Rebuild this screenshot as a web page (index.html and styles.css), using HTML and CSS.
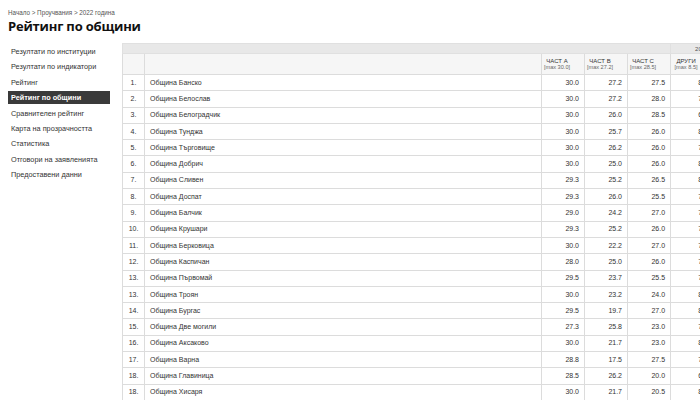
FILE: index.html
```html
<!DOCTYPE html>
<html lang="bg">
<head>
	<meta charset="UTF-8">
	<meta name="viewport" content="width=device-width, initial-scale=1.0">
	<title>Рейтинг по общини</title>
	<link rel="stylesheet" href="styles.css">
</head>
<body>
	<div class="page">
		<div class="breadcrumb">Начало &gt; Проучвания &gt; 2022 година</div>
		<h1 class="title">Рейтинг по общини</h1>

		<div class="layout">
			<ul class="side-menu">
				<li><a href="#">Резултати по институции</a></li>
				<li><a href="#">Резултати по индикатори</a></li>
				<li><a href="#">Рейтинг</a></li>
				<li class="active"><a href="#">Рейтинг по общини</a></li>
				<li><a href="#">Сравнителен рейтинг</a></li>
				<li><a href="#">Карта на прозрачността</a></li>
				<li><a href="#">Статистика</a></li>
				<li><a href="#">Отговори на заявленията</a></li>
				<li><a href="#">Предоставени данни</a></li>
			</ul>

			<div class="content">
				<table class="rating">
					<colgroup>
						<col class="c-rank">
						<col class="c-name">
						<col class="c-num">
						<col class="c-num">
						<col class="c-num">
						<col class="c-num">
						<col class="c-num">
					</colgroup>
					<thead>
						<tr class="band">
							<td colspan="5"></td>
							<td colspan="2" class="band-year">2022 година</td>
						</tr>
						<tr class="head">
							<th></th>
							<th></th>
							<th>ЧАСТ A<span>[max 30.0]</span></th>
							<th>ЧАСТ B<span>[max 27.2]</span></th>
							<th>ЧАСТ C<span>[max 28.5]</span></th>
							<th>ДРУГИ<span>[max 8.5]</span></th>
							<th>ОБЩО<span>[max 100]</span></th>
						</tr>
					</thead>
					<tbody id="rows"></tbody>
				</table>
			</div>
		</div>
	</div>

	<script>
		var data = [
			["1.", "Община Банско", "30.0", "27.2", "27.5", "8.0"],
			["2.", "Община Белослав", "30.0", "27.2", "28.0", "7.5"],
			["3.", "Община Белоградчик", "30.0", "26.0", "28.5", "6.5"],
			["4.", "Община Тунджа", "30.0", "25.7", "26.0", "8.0"],
			["5.", "Община Търговище", "30.0", "26.2", "26.0", "7.5"],
			["6.", "Община Добрич", "30.0", "25.0", "26.0", "8.0"],
			["7.", "Община Сливен", "29.3", "25.2", "26.5", "8.0"],
			["8.", "Община Доспат", "29.3", "26.0", "25.5", "7.5"],
			["9.", "Община Балчик", "29.0", "24.2", "27.0", "7.5"],
			["10.", "Община Крушари", "29.3", "25.2", "26.0", "7.0"],
			["11.", "Община Берковица", "30.0", "22.2", "27.0", "7.5"],
			["12.", "Община Каспичан", "28.0", "25.0", "26.0", "7.5"],
			["13.", "Община Първомай", "29.5", "23.7", "25.5", "7.5"],
			["13.", "Община Троян", "30.0", "23.2", "24.0", "8.0"],
			["14.", "Община Бургас", "29.5", "19.7", "27.0", "8.0"],
			["15.", "Община Две могили", "27.3", "25.8", "23.0", "7.5"],
			["16.", "Община Аксаково", "30.0", "21.7", "23.0", "8.0"],
			["17.", "Община Варна", "28.8", "17.5", "27.5", "7.5"],
			["18.", "Община Главиница", "28.5", "26.2", "20.0", "6.5"],
			["18.", "Община Хисаря", "30.0", "21.7", "20.5", "8.0"]
		];

		var tbody = document.getElementById("rows");
		for (var i = 0; i < data.length; i++) {
			var r = data[i];
			var total = (parseFloat(r[2]) + parseFloat(r[3]) + parseFloat(r[4]) + parseFloat(r[5])).toFixed(1);
			var tr = document.createElement("tr");
			tr.innerHTML =
				'<td class="rank">' + r[0] + '</td>' +
				'<td class="name">' + r[1] + '</td>' +
				'<td class="num">' + r[2] + '</td>' +
				'<td class="num">' + r[3] + '</td>' +
				'<td class="num">' + r[4] + '</td>' +
				'<td class="num">' + r[5] + '</td>' +
				'<td class="num">' + total + '</td>';
			tbody.appendChild(tr);
		}
	</script>
</body>
</html>
```

FILE: styles.css
```css
html, body {
	margin: 0;
	padding: 0;
	background-color: #fff;
	overflow: hidden;
}

.page {
	padding: 8px 0 0 8px;
	font-family: "Liberation Sans", Arial, sans-serif;
	color: #222;
}

.breadcrumb {
	font-size: 6.3px;
	line-height: 9px;
	color: #555;
}

.title {
	margin: 0;
	font-family: "Open Sans", "Liberation Sans", sans-serif;
	font-size: 13px;
	letter-spacing: -0.2px;
	line-height: 18px;
	font-weight: 700;
	color: #111;
}

.layout {
	display: flex;
	margin-top: 8px;
}

/* left menu */
.side-menu {
	list-style: none;
	margin: 0;
	padding: 2px 0 0 0;
	width: 102px;
	flex-shrink: 0;
	margin-right: 12px;
}

.side-menu li {
	margin-bottom: 2.4px;
}

.side-menu a {
	display: block;
	padding: 0 3px;
	font-size: 7.3px;
	line-height: 13px;
	color: #333;
	text-decoration: none;
	white-space: nowrap;
}

.side-menu .active a {
	background-color: #3a3a3a;
	color: #fff;
	font-weight: bold;
}

/* rating table */
.content {
	flex: 1;
	min-width: 0;
	overflow: hidden;
}

.rating {
	border-collapse: collapse;
	table-layout: fixed;
	width: 634px;
	font-size: 7px;
	color: #333;
}

.c-rank { width: 22px; }
.c-name { width: 397px; }
.c-num { width: 43px; }

.rating td, .rating th {
	border: 1px solid #dcdcdc;
	padding: 0 5px;
	white-space: nowrap;
	overflow: hidden;
}

.band td {
	height: 9px;
	line-height: 6px;
	background-color: #e8e8e8;
	border-color: #e0e0e0;
	font-size: 6px;
	color: #555;
}

.band-year {
	padding-left: 24px !important;
}

.head th {
	height: 20px;
	background-color: #f6f6f6;
	font-weight: normal;
	font-size: 6px;
	line-height: 6px;
	color: #333;
	text-align: center;
	padding-right: 12px;
	padding-left: 0;
}

.head th span {
	display: block;
	font-size: 5.6px;
	color: #666;
}

.rating tbody td {
	height: 15.3px;
	line-height: 8px;
}

.rank {
	text-align: center;
	padding: 0 !important;
}

.name {
	text-align: left;
}

.num {
	text-align: right;
}
```
